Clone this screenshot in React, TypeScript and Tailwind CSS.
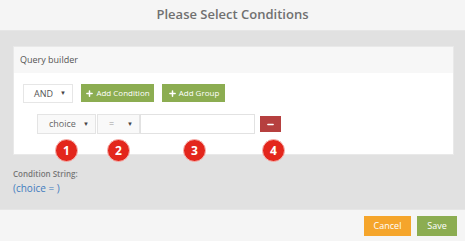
import { Plus, Minus } from 'lucide-react'

function Select({ label, width }: { label: string; width: string }) {
  return (
    <div
      className={`${width} h-full flex items-center justify-between pl-[11px] pr-[6px] bg-[#f9f9f9] border border-[#e4e4e4] text-[#666] text-[9px]`}
    >
      <span>{label}</span>
      <span className="text-[6px] text-[#444]">▼</span>
    </div>
  )
}

function Badge({ n, left }: { n: number; left: string }) {
  return (
    <div
      className={`absolute ${left} top-[-15px] w-[23px] h-[23px] rounded-full bg-[#e3261c] border border-[#f6b6b2] flex items-center justify-center text-white text-[12px] font-bold`}
    >
      {n}
    </div>
  )
}

export default function App() {
  return (
    <div className="w-[465px] h-[241px] flex flex-col bg-[#e1e1e1] font-['Open_Sans',sans-serif]">
      <header className="h-[31px] shrink-0 flex items-center justify-center bg-[#f5f5f5] border-b border-[#e6e6e6]">
        <h2 className="text-[13px] font-semibold text-[#707070]">Please Select Conditions</h2>
      </header>

      <main className="flex-1 px-[13px] pt-[15px]">
        <div className="w-[441px] bg-white border border-[#e9e9e9]">
          <div className="h-[26px] flex items-center pl-[6px] bg-[#f7f7f7] text-[9px] text-[#555]">Query builder</div>
          <div className="relative h-[81px] pl-[9px] pt-[11px]">
            <div className="flex gap-[8px] h-[19px]">
              <div className="w-[50px] h-full flex items-center justify-between pl-[10px] pr-[6px] bg-white border border-[#e6e6e6] text-[#555] text-[9px]">
                <span>AND</span>
                <span className="text-[6px] text-[#444]">▼</span>
              </div>
              <button className="w-[73px] h-[18px] flex items-center justify-center gap-[2px] bg-[#8cad51] text-white text-[8px]">
                <Plus size={9} strokeWidth={4} />
                Add Condition
              </button>
              <button className="w-[63px] h-[18px] flex items-center justify-center gap-[2px] bg-[#8cad51] text-white text-[8px]">
                <Plus size={9} strokeWidth={4} />
                Add Group
              </button>
            </div>
            <div className="flex items-center h-[20px] mt-[11px] ml-[14px]">
              <Select label="choice" width="w-[59px]" />
              <div className="w-[43px] h-full ml-[1px] flex items-center justify-between pl-[11px] pr-[6px] bg-[#f9f9f9] border border-[#e4e4e4] text-[#999] text-[9px]">
                <span>=</span>
                <span className="text-[6px] text-[#444]">▼</span>
              </div>
              <div className="w-[115px] h-full bg-white border border-[#e2e2e2]" />
              <button className="ml-[5px] w-[21px] h-[16px] flex items-center justify-center bg-[#b6403f] text-white">
                <Minus size={9} strokeWidth={4} />
              </button>
            </div>
            <div className="absolute left-0 bottom-0 w-full h-0">
              <Badge n={1} left="left-[41px]" />
              <Badge n={2} left="left-[93px]" />
              <Badge n={3} left="left-[169px]" />
              <Badge n={4} left="left-[248px]" />
            </div>
          </div>
        </div>
        <div className="mt-[13px] text-[8px] font-semibold text-[#777]">Condition String:</div>
        <div className="mt-[1px] text-[10px] text-[#3f7cbf]">(choice = )</div>
      </main>

      <footer className="h-[32px] shrink-0 flex items-center justify-end gap-[6px] pr-[8px] bg-[#f5f5f5] border-t border-[#e6e6e6]">
        <button className="w-[47px] h-[20px] bg-[#f5a52b] text-white text-[9px]">Cancel</button>
        <button className="w-[40px] h-[20px] bg-[#8cad51] text-white text-[9px]">Save</button>
      </footer>
    </div>
  )
}
